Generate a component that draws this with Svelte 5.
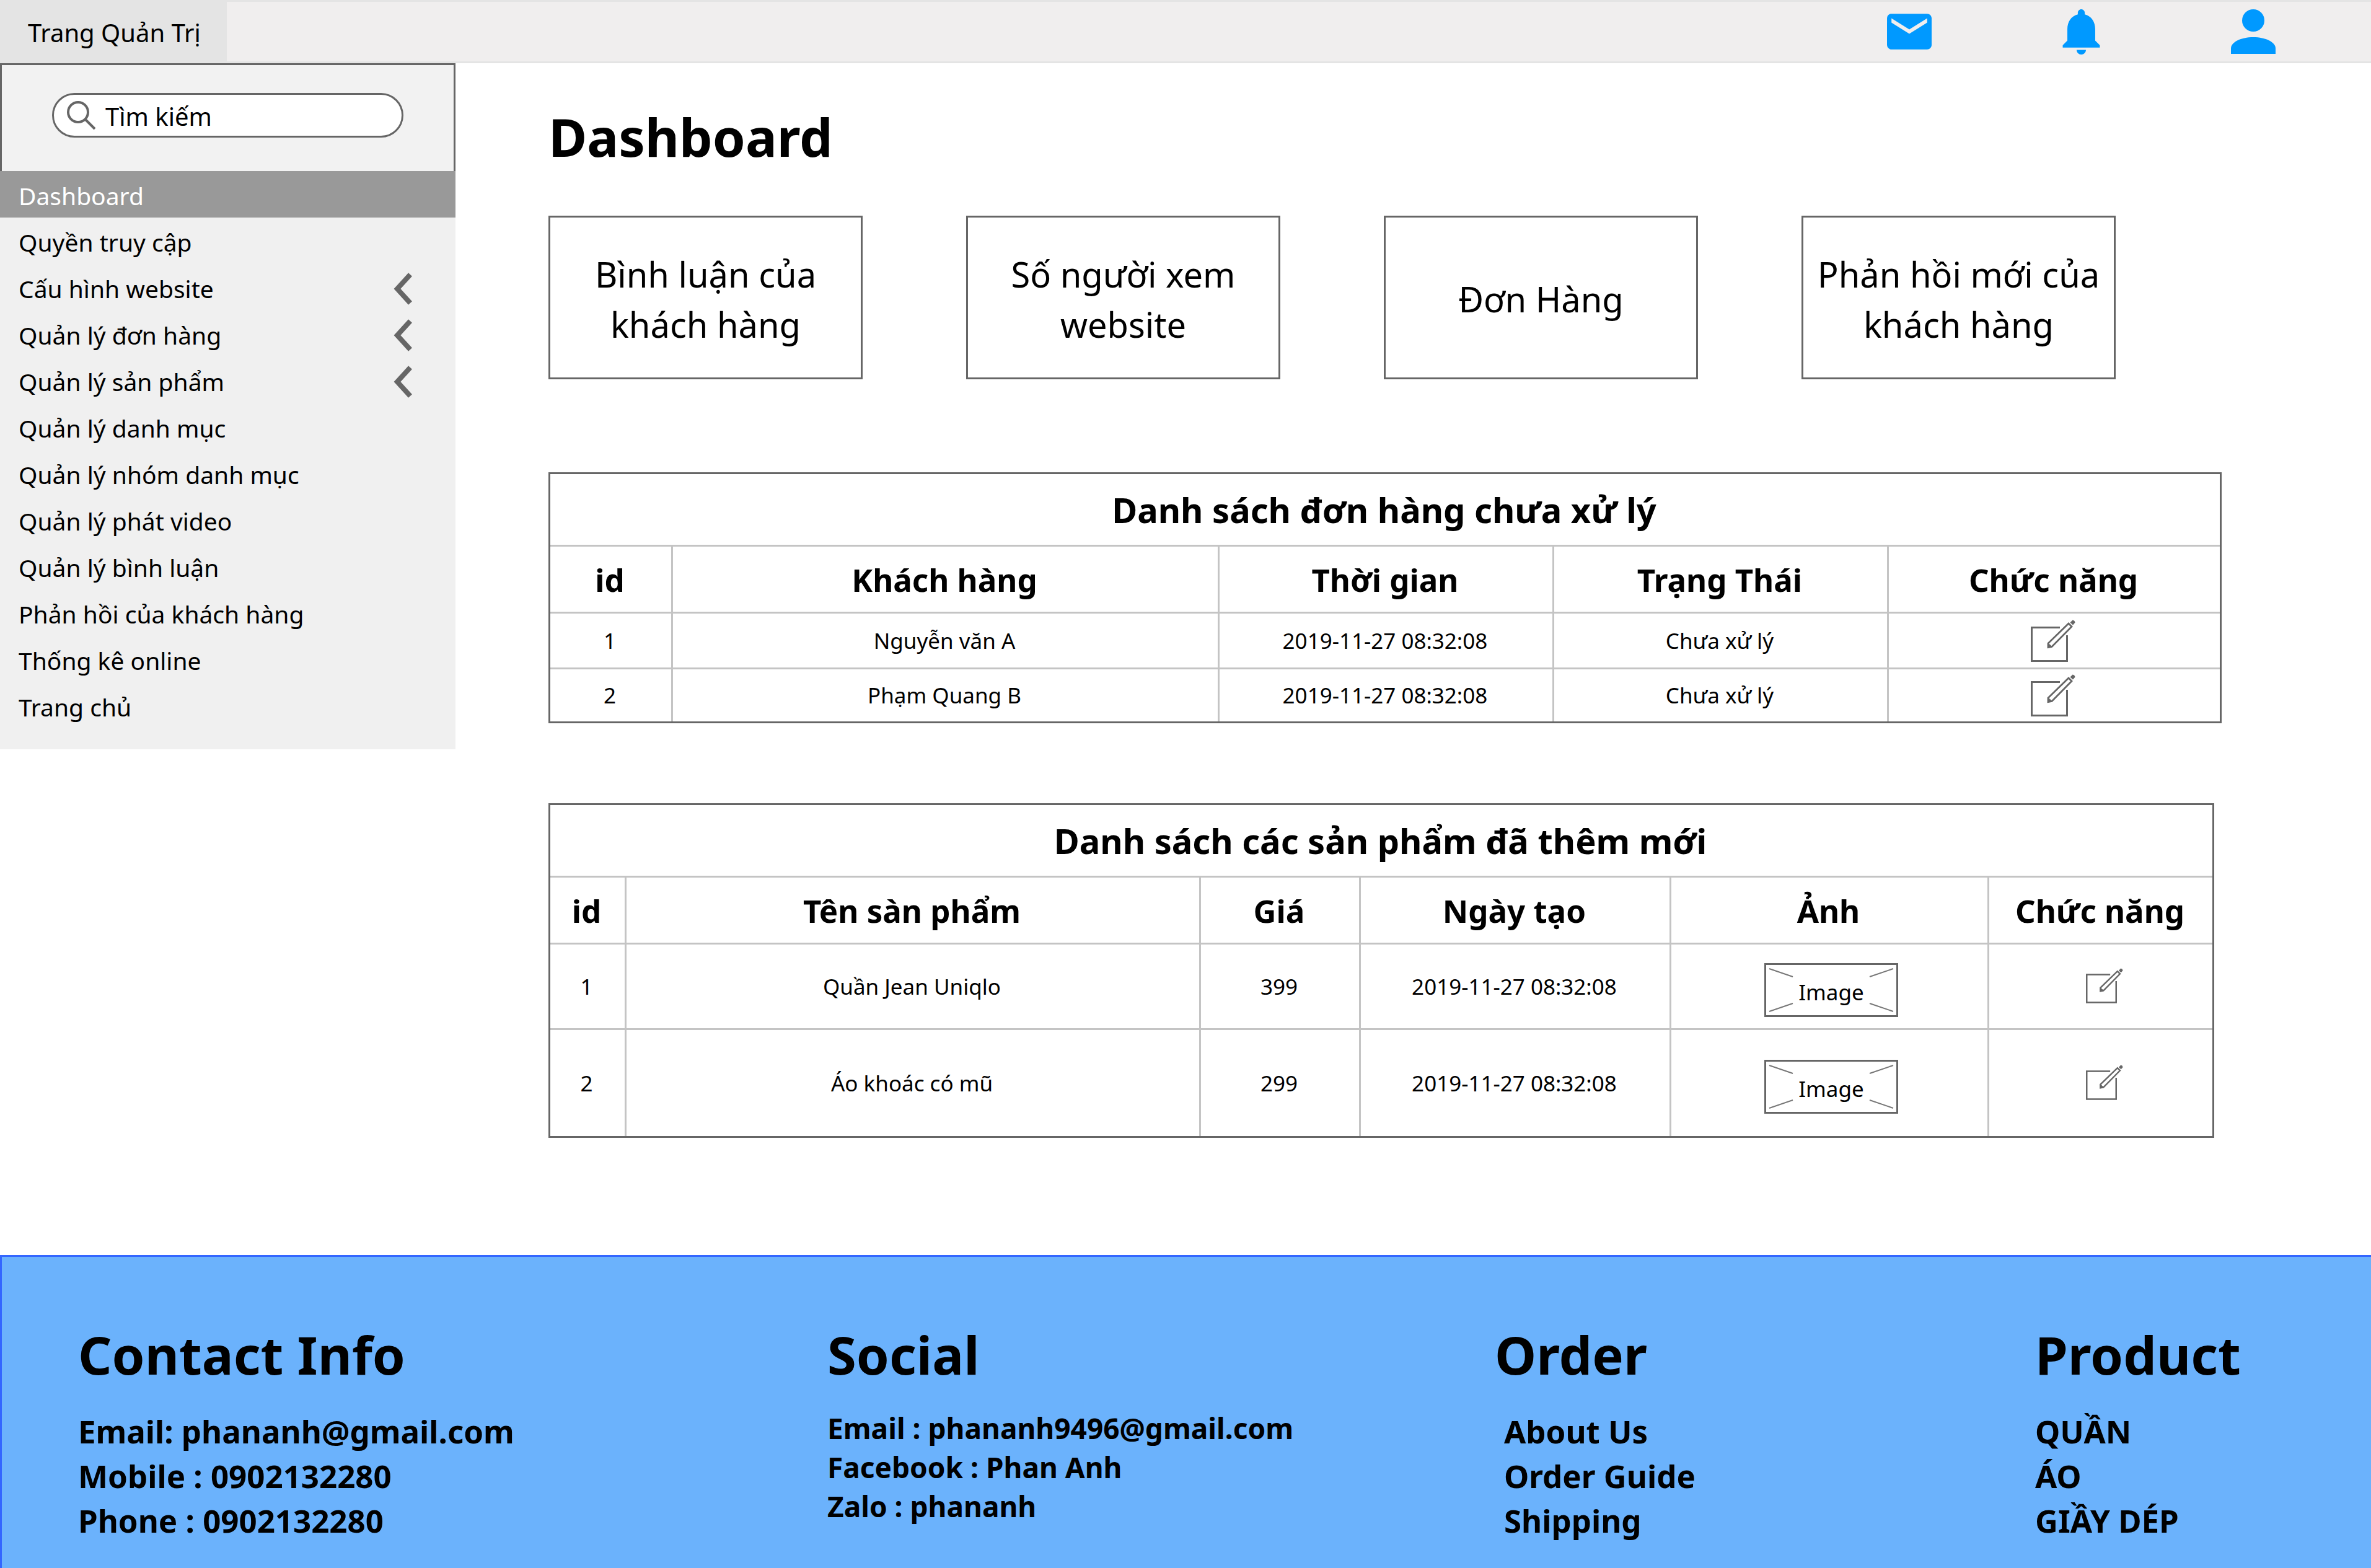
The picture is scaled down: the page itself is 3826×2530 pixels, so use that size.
<script>
  const menu = [
    { label: 'Dashboard', active: true },
    { label: 'Quyền truy cập' },
    { label: 'Cấu hình website', expandable: true },
    { label: 'Quản lý đơn hàng', expandable: true },
    { label: 'Quản lý sản phẩm', expandable: true },
    { label: 'Quản lý danh mục' },
    { label: 'Quản lý nhóm danh mục' },
    { label: 'Quản lý phát video' },
    { label: 'Quản lý bình luận' },
    { label: 'Phản hồi của khách hàng' },
    { label: 'Thống kê online' },
    { label: 'Trang chủ' },
  ];

  const cards = [
    'Bình luận của khách hàng',
    'Số người xem website',
    'Đơn Hàng',
    'Phản hồi mới của khách hàng',
  ];

  const orders = [
    { id: 1, customer: 'Nguyễn văn A', time: '2019-11-27 08:32:08', status: 'Chưa xử lý' },
    { id: 2, customer: 'Phạm Quang B', time: '2019-11-27 08:32:08', status: 'Chưa xử lý' },
  ];

  const products = [
    { id: 1, name: 'Quần Jean Uniqlo', price: 399, created: '2019-11-27 08:32:08' },
    { id: 2, name: 'Áo khoác có mũ', price: 299, created: '2019-11-27 08:32:08' },
  ];
</script>

{#snippet editIcon()}
  <svg viewBox="0 0 72 68" fill="none" stroke="#666" stroke-width="3" aria-hidden="true">
    <path d="M47 12.5H1.5V66.5H58.5V25" />
    <path d="M28 44.5V38L61 6L66 11L34 43.5Z" stroke-width="2.8" />
    <path d="M28 45V38L34.5 43.5Z" fill="#666" stroke-width="1" />
    <path d="M63.5 4.5L67.5 0.5Q71 1 71.5 4.5L68 8.5Z" fill="#666" stroke="none" />
  </svg>
{/snippet}

<div class="page">
  <header class="topbar">
    <a class="brand" href="#home">Trang Quản Trị</a>
    <div class="actions">
      <button class="mail" aria-label="Tin nhắn">
        <svg viewBox="2 4 20 16" fill="#09f" aria-hidden="true">
          <path d="M20 4H4c-1.1 0-1.99.9-1.99 2L2 18c0 1.1.9 2 2 2h16c1.1 0 2-.9 2-2V6c0-1.1-.9-2-2-2zm0 4l-8 5-8-5V6l8 5 8-5v2z" />
        </svg>
      </button>
      <button class="bell" aria-label="Thông báo">
        <svg viewBox="4 2.5 16 19.5" fill="#09f" aria-hidden="true">
          <path d="M12 22c1.1 0 2-.9 2-2h-4c0 1.1.89 2 2 2zm6-6v-5c0-3.07-1.64-5.64-4.5-6.32V4c0-.83-.67-1.5-1.5-1.5s-1.5.67-1.5 1.5v.68C7.63 5.36 6 7.92 6 11v5l-2 2v1h16v-1l-2-2z" />
        </svg>
      </button>
      <button class="user" aria-label="Tài khoản">
        <svg viewBox="0 0 72 72" fill="#09f" aria-hidden="true">
          <circle cx="36" cy="18" r="18" />
          <path d="M0 72V63C0 53 16 45 36 45S72 53 72 63V72Z" />
        </svg>
      </button>
    </div>
  </header>

  <div class="body">
    <aside class="sidebar">
      <form class="search-panel">
        <label class="search">
          <svg viewBox="0 0 47 47" fill="none" stroke="#666" stroke-width="4" aria-hidden="true">
            <circle cx="18" cy="18" r="16" />
            <path d="M30 30L45 45" />
          </svg>
          <input type="search" placeholder="Tìm kiếm" aria-label="Tìm kiếm" />
        </label>
      </form>
      <nav class="menu">
        {#each menu as item}
          <a class="item" class:active={item.active} href="#menu">
            {item.label}
            {#if item.expandable}
              <svg viewBox="0 0 30 52" fill="none" stroke="#666" stroke-width="8" aria-hidden="true">
                <path d="M27 3L6 26L27 49" />
              </svg>
            {/if}
          </a>
        {/each}
      </nav>
    </aside>

    <main class="content">
      <h1>Dashboard</h1>

      <section class="cards">
        {#each cards as card}
          <a class="card" href="#card">{card}</a>
        {/each}
      </section>

      <table class="orders">
        <colgroup>
          <col class="c-id" /><col /><col class="c-mid" /><col class="c-mid" /><col class="c-act" />
        </colgroup>
        <thead>
          <tr class="title"><th colspan="5">Danh sách đơn hàng chưa xử lý</th></tr>
          <tr class="heads">
            <th>id</th><th>Khách hàng</th><th>Thời gian</th><th>Trạng Thái</th><th>Chức năng</th>
          </tr>
        </thead>
        <tbody>
          {#each orders as order}
            <tr>
              <td>{order.id}</td>
              <td>{order.customer}</td>
              <td>{order.time}</td>
              <td>{order.status}</td>
              <td><button class="edit" aria-label="Sửa đơn hàng">{@render editIcon()}</button></td>
            </tr>
          {/each}
        </tbody>
      </table>

      <table class="products">
        <colgroup>
          <col class="p-id" /><col /><col class="p-price" /><col class="p-date" /><col class="p-image" /><col class="p-act" />
        </colgroup>
        <thead>
          <tr class="title"><th colspan="6">Danh sách các sản phẩm đã thêm mới</th></tr>
          <tr class="heads">
            <th>id</th><th>Tên sàn phẩm</th><th>Giá</th><th>Ngày tạo</th><th>Ảnh</th><th>Chức năng</th>
          </tr>
        </thead>
        <tbody>
          {#each products as product}
            <tr>
              <td>{product.id}</td>
              <td>{product.name}</td>
              <td>{product.price}</td>
              <td>{product.created}</td>
              <td class="picture">
                <div class="thumb">
                  <svg viewBox="0 0 216 87" fill="none" stroke="#777" stroke-width="2" aria-hidden="true">
                    <path d="M8 9L46 22M208 9L170 22M8 78L46 65M208 78L170 65" />
                  </svg>
                  <span>Image</span>
                </div>
              </td>
              <td class="tool"><button class="edit" aria-label="Sửa sản phẩm">{@render editIcon()}</button></td>
            </tr>
          {/each}
        </tbody>
      </table>
    </main>
  </div>

  <footer class="footer">
    <section>
      <h2>Contact Info</h2>
      <ul>
        <li>Email: phananh@gmail.com</li>
        <li>Mobile : 0902132280</li>
        <li>Phone : 0902132280</li>
      </ul>
    </section>
    <section class="social">
      <h2>Social</h2>
      <ul>
        <li>Email : phananh9496@gmail.com</li>
        <li>Facebook : Phan Anh</li>
        <li>Zalo : phananh</li>
      </ul>
    </section>
    <section class="order">
      <h2>Order</h2>
      <ul>
        <li><a href="#about">About Us</a></li>
        <li><a href="#guide">Order Guide</a></li>
        <li><a href="#shipping">Shipping</a></li>
      </ul>
    </section>
    <section>
      <h2>Product</h2>
      <ul>
        <li><a href="#quan">QUẦN</a></li>
        <li><a href="#ao">ÁO</a></li>
        <li><a href="#giay">GIẦY DÉP</a></li>
      </ul>
    </section>
  </footer>
</div>

<style>
  :global(body) {
    background: #fff;
    color: #000;
    font-family: 'Noto Sans', 'Open Sans', sans-serif;
  }

  * {
    box-sizing: border-box;
  }

  a {
    color: inherit;
    text-decoration: none;
  }

  button {
    padding: 0;
    border: 0;
    background: none;
    cursor: pointer;
  }

  svg {
    display: block;
    width: 100%;
    height: 100%;
  }

  h1,
  h2 {
    margin: 0;
    font-size: 85px;
    line-height: 114px;
    font-weight: 700;
  }

  .page {
    display: flex;
    flex-direction: column;
    min-height: 100vh;
  }

  .topbar {
    display: flex;
    justify-content: space-between;
    height: 102px;
    border: solid #e4e4e4;
    border-width: 3px 0;
    background: #f0eeee;
  }

  .brand {
    display: flex;
    align-items: center;
    width: 366px;
    padding: 3px 0 0 45px;
    background: #e4e4e4;
    font-size: 40px;
    white-space: nowrap;
  }

  .actions {
    display: flex;
    align-items: center;
    gap: 211px;
    padding-right: 154px;
  }

  .mail {
    width: 72px;
    height: 58px;
  }

  .bell {
    width: 61px;
    height: 73px;
  }

  .user {
    width: 72px;
    height: 72px;
  }

  .body {
    display: flex;
    align-items: flex-start;
  }

  .sidebar {
    flex: none;
    width: 735px;
    padding-bottom: 33px;
    background: #f0f0f0;
  }

  .search-panel {
    height: 174px;
    padding: 45px 81px 0;
    border: 3px solid #666;
    border-bottom: 0;
    background: #f2f2f2;
  }

  .search {
    display: flex;
    align-items: center;
    gap: 15px;
    height: 72px;
    padding: 0 21px;
    border: 3px solid #666;
    border-radius: 36px;
    background: #fff;
  }

  .search svg {
    flex: none;
    width: 47px;
    height: 47px;
  }

  .search input {
    flex: 1;
    min-width: 0;
    padding: 2px 0 0;
    border: 0;
    outline: 0;
    background: none;
    font: inherit;
    font-size: 40px;
  }

  .search input::placeholder {
    color: #000;
    opacity: 1;
  }

  .item {
    display: flex;
    align-items: center;
    justify-content: space-between;
    height: 75px;
    padding: 4px 70px 0 30px;
    font-size: 39px;
    white-space: nowrap;
  }

  .item.active {
    background: #999;
    color: #fff;
  }

  .item svg {
    width: 30px;
    height: 52px;
  }

  .content {
    flex: 1;
    min-width: 0;
    padding: 61px 241px 189px 150px;
  }

  .cards {
    display: grid;
    grid-template-columns: repeat(4, 1fr);
    gap: 167px;
    margin: 71px 171px 150px 0;
  }

  .card {
    display: flex;
    align-items: center;
    justify-content: center;
    height: 264px;
    padding-top: 5px;
    border: 3px solid #666;
    font-size: 56px;
    line-height: 81px;
    text-align: center;
  }

  table {
    width: 100%;
    table-layout: fixed;
    border: 3px solid #666;
    border-spacing: 0;
    font-size: 35px;
    line-height: 48px;
    text-align: center;
  }

  th,
  td {
    padding: 0 3px 0 0;
    border: solid #c4c4c4;
    border-width: 3px 0 0 3px;
    vertical-align: middle;
  }

  th:first-child,
  td:first-child {
    border-left: 0;
  }

  .title {
    height: 114px;
  }

  .title th {
    border-top: 0;
    font-size: 56px;
    line-height: 76px;
  }

  .heads {
    height: 108px;
  }

  .heads th {
    font-size: 51px;
    line-height: 70px;
  }

  .edit {
    display: block;
    width: 72px;
    height: 68px;
    margin: 0 auto;
  }

  .orders {
    margin-bottom: 129px;
  }

  .orders tbody tr {
    height: 90px;
  }

  .orders tbody tr:last-child {
    height: 87px;
  }

  .c-id {
    width: 195px;
  }

  .c-mid {
    width: 540px;
  }

  .c-act {
    width: 537px;
  }

  .products {
    width: calc(100% - 12px);
  }

  .products tbody tr {
    height: 138px;
  }

  .products tbody tr:last-child {
    height: 174px;
  }

  .p-id {
    width: 120px;
  }

  .p-price {
    width: 258px;
  }

  .p-date {
    width: 501px;
  }

  .p-image {
    width: 513px;
  }

  .p-act {
    width: 363px;
  }

  .picture {
    padding: 12px 0 0 6px;
  }

  .tool {
    padding: 0 0 3px 12px;
  }

  .tool .edit {
    width: 60px;
    height: 57px;
  }

  .thumb {
    display: grid;
    place-items: center;
    width: 216px;
    height: 87px;
    margin: 0 auto;
    outline: 3px solid #666;
    outline-offset: -3px;
  }

  .thumb > * {
    grid-area: 1 / 1;
  }

  .thumb span {
    padding-top: 6px;
  }

  .footer {
    display: grid;
    flex: 1;
    grid-template-columns: 1209fr 1077fr 872fr 542fr;
    padding: 100px 0 40px 123px;
    border: solid #36f;
    border-width: 3px 0 0 3px;
    background: #6bb2fc;
    font-weight: 700;
    white-space: nowrap;
  }

  ul {
    margin: 31px 0 0;
    padding: 0;
    list-style: none;
    font-size: 51px;
    line-height: 72px;
  }

  .social ul {
    font-size: 46px;
    line-height: 63px;
  }

  .order ul {
    padding-left: 15px;
  }
</style>
